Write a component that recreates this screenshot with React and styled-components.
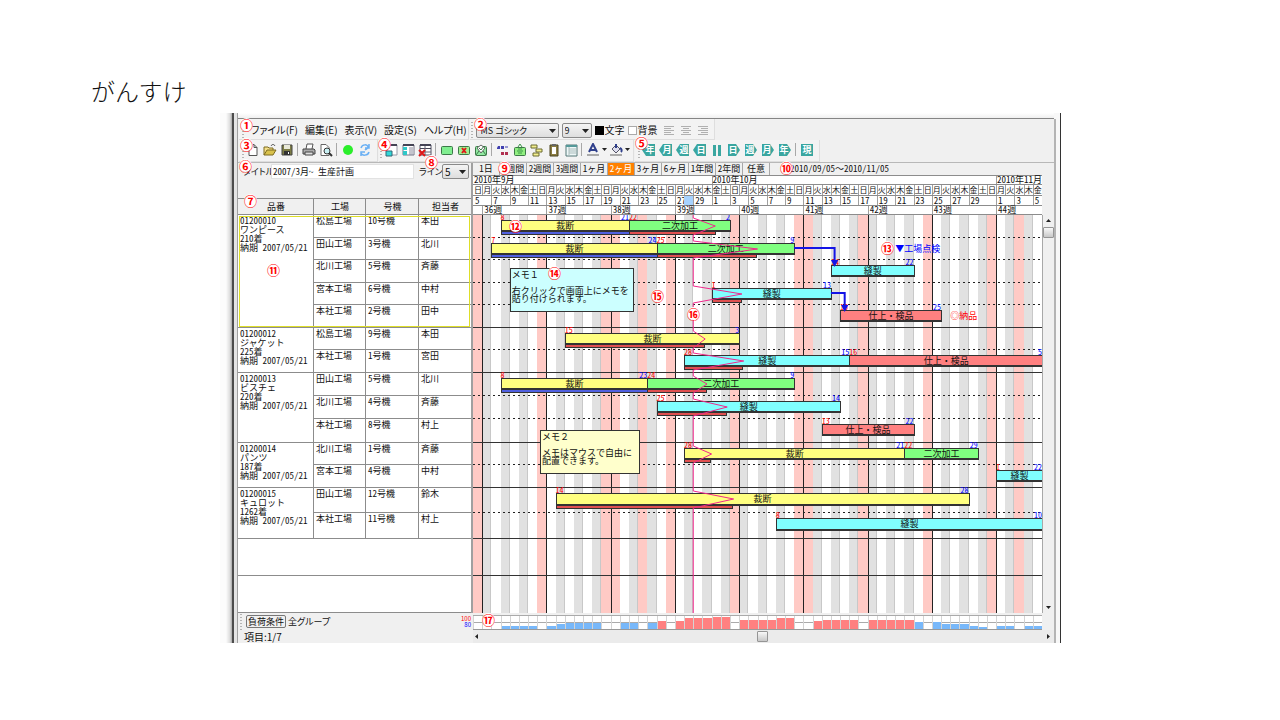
import { Fragment } from "react";
import styled, { createGlobalStyle, css } from "styled-components";

const GlobalStyle = createGlobalStyle`
  * {
    box-sizing: border-box;
  }

  body {
    margin: 0;
    background-color: #ffffff;
    color: #111111;
    font-family: "Noto Sans CJK JP", "Liberation Sans", sans-serif;
    font-size: 9px;
    line-height: 9px;
  }

  button,
  input,
  select {
    margin: 0;
    padding: 0;
    border: 0;
    background: none;
    color: inherit;
    font: inherit;
  }
`;

const DAYS = 62;
const TODAY = 24;
const FIRST_DAY = Date.UTC(2010, 8, 5);
const HOLIDAYS = ["9/20", "9/23", "10/11", "11/3"];
const WEEKDAYS = "日月火水木金土";

const days = Array.from({ length: DAYS }, (_, index) => {
  const date = new Date(FIRST_DAY + index * 86400000);
  const month = date.getUTCMonth() + 1;
  const day = date.getUTCDate();
  const weekday = date.getUTCDay();
  return {
    index,
    day,
    weekday,
    off: weekday === 0 || HOLIDAYS.includes(`${month}/${day}`),
  };
});

const MONTHS = [
  { label: "2010年9月", from: 0, to: 26 },
  { label: "2010年10月", from: 26, to: 57 },
  { label: "2010年11月", from: 57, to: 62 },
];

const COLORS = {
  cut: "#ffff80",
  second: "#80ff80",
  sew: "#80ffff",
  finish: "#ff8080",
};

const GROUPS = [
  {
    code: "01200010",
    name: "ワンピース",
    count: "210着",
    due: "納期 2007/05/21",
    selected: true,
    lanes: [
      {
        height: 23,
        row: ["松島工場", "10号機", "本田"],
        apex: 26.4,
        tasks: [
          { label: "裁断", kind: "cut", from: 3, to: 17, start: 8, end: 21, done: 17 },
          { label: "二次加工", kind: "second", from: 17, to: 28, start: 22, end: 2, late: 26.4 },
        ],
      },
      {
        height: 22,
        row: ["田山工場", "3号機", "北川"],
        apex: 31,
        tasks: [
          { label: "裁断", kind: "cut", from: 2, to: 20, start: 7, end: 24, done: 20 },
          { label: "二次加工", kind: "second", from: 20, to: 35, start: 25, end: 9, late: 30.9 },
        ],
      },
      {
        height: 23,
        row: ["北川工場", "5号機", "斉藤"],
        tasks: [{ label: "縫製", kind: "sew", from: 39, to: 48, start: 14, end: 22 }],
      },
      {
        height: 22,
        row: ["宮本工場", "6号機", "中村"],
        apex: 29.3,
        tasks: [{ label: "縫製", kind: "sew", from: 26, to: 39, start: 1, end: 13, late: 29.3 }],
      },
      {
        height: 23,
        row: ["本社工場", "2号機", "田中"],
        tasks: [{ label: "仕上・検品", kind: "finish", from: 40, to: 51, start: 15, end: 25 }],
      },
    ],
  },
  {
    code: "01200012",
    name: "ジャケット",
    count: "225着",
    due: "納期 2007/05/21",
    lanes: [
      {
        height: 22,
        row: ["松島工場", "9号機", "本田"],
        apex: 25.3,
        tasks: [{ label: "裁断", kind: "cut", from: 10, to: 29, start: 15, end: 3, late: 25.2 }],
      },
      {
        height: 23,
        row: ["本社工場", "1号機", "宮田"],
        apex: 29.5,
        tasks: [
          { label: "縫製", kind: "sew", from: 23, to: 41, start: 28, end: 15, late: 29.4 },
          { label: "仕上・検品", kind: "finish", from: 41, to: 62, start: 16, end: 5 },
        ],
      },
    ],
  },
  {
    code: "01200013",
    name: "ビスチェ",
    count: "220着",
    due: "納期 2007/05/21",
    lanes: [
      {
        height: 23,
        row: ["田山工場", "5号機", "北川"],
        apex: 25.5,
        tasks: [
          { label: "裁断", kind: "cut", from: 3, to: 19, start: 8, end: 23, done: 19 },
          { label: "二次加工", kind: "second", from: 19, to: 35, start: 24, end: 9, late: 25.5 },
        ],
      },
      {
        height: 23,
        row: ["北川工場", "4号機", "斉藤"],
        apex: 27.7,
        tasks: [{ label: "縫製", kind: "sew", from: 20, to: 40, start: 25, end: 14, late: 27.6 }],
      },
      {
        height: 24,
        row: ["本社工場", "8号機", "村上"],
        tasks: [{ label: "仕上・検品", kind: "finish", from: 38, to: 48, start: 13, end: 22 }],
      },
    ],
  },
  {
    code: "01200014",
    name: "パンツ",
    count: "187着",
    due: "納期 2007/05/21",
    lanes: [
      {
        height: 22,
        row: ["北川工場", "1号機", "斉藤"],
        apex: 26,
        tasks: [
          { label: "裁断", kind: "cut", from: 23, to: 47, start: 28, end: 21, late: 25.9 },
          { label: "二次加工", kind: "second", from: 47, to: 55, start: 22, end: 29 },
        ],
      },
      {
        height: 23,
        row: ["宮本工場", "4号機", "中村"],
        tasks: [{ label: "縫製", kind: "sew", from: 57, to: 62, start: 1, end: 22 }],
      },
    ],
  },
  {
    code: "01200015",
    name: "キュロット",
    count: "1262着",
    due: "納期 2007/05/21",
    lanes: [
      {
        height: 25,
        row: ["田山工場", "12号機", "鈴木"],
        apex: 28.4,
        tall: true,
        tasks: [{ label: "裁断", kind: "cut", from: 9, to: 54, start: 14, end: 28, late: 28.3 }],
      },
      {
        height: 26,
        row: ["本社工場", "11号機", "村上"],
        tall: true,
        tasks: [{ label: "縫製", kind: "sew", from: 33, to: 62, start: 8, end: 10 }],
      },
    ],
  },
];

const EMPTY_ROWS = [37, 37];

// load per day in pixels, 80% and above is drawn red
const LOAD = [
  0, 0, 0, 3, 3, 3, 3, 0, 3, 5, 6, 6, 6, 6, 0, 0, 6, 6, 0, 6, 8, 0, 8, 11, 11,
  11, 12, 12, 0, 9, 9, 9, 9, 11, 11, 0, 0, 8, 9, 9, 9, 9, 0, 9, 9, 9, 9, 9, 7,
  0, 7, 5, 5, 5, 3, 2, 0, 3, 3, 0, 3, 3,
];

const Page = styled.main`
  padding: 76px 219px 0 220px;
`;

const Title = styled.h1`
  margin: 0 0 7px -129px;
  color: #111111;
  font-size: 24px;
  font-weight: 300;
  line-height: 30px;
`;

const Window = styled.section`
  position: relative;
  display: grid;
  grid-template-columns: 18px minmax(0, 1fr) 7px;
`;

const LeftFrame = styled.div`
  background: linear-gradient(
    90deg,
    #fcfcfc 0 6px,
    #dcdcdc 10px,
    #a8a8a8 12px,
    #4c4c4c 12px 14px,
    #e4e4e4 14px 17px,
    #a0a0a0 17px
  );
`;

const RightFrame = styled.div`
  border-right: 1px solid #333333;
  background: linear-gradient(#b4b4b4, #b4b4b4) 0 6px / 2px 100% no-repeat #f8f8f8;
`;

const Client = styled.div`
  background-color: #f0f0f0;
`;

const CaptionEdge = styled.div`
  height: 6px;
  background: linear-gradient(#ffffff, #f0f0f0);
  border-bottom: 1px solid #858585;
`;

const ToolRow = styled.div`
  display: flex;
  height: ${({ $height }) => $height}px;
`;

const Toolbar = styled.div`
  display: flex;
  align-items: center;
  gap: ${({ $gap }) => $gap || 0}px;
  margin-left: 1px;
  padding: ${({ $top }) => $top || 0}px ${({ $end }) => $end || 4}px
    ${({ $bottom }) => $bottom || 0}px ${({ $start }) => $start || 3}px;
  border-right: 1px solid #dedede;
  border-bottom: 1px solid #dedede;
  background-color: #f3f3f3;
`;

const Grip = styled.span`
  width: 2px;
  height: 16px;
  background: repeating-linear-gradient(#b4b4b4 0 1px, transparent 1px 3px);
`;

const MenuButton = styled.button`
  font-size: 10px;
  line-height: 14px;
  white-space: nowrap;
  font-feature-settings: "palt";
`;

const SelectBox = styled.span`
  position: relative;
  display: block;
  width: ${({ $width }) => $width}px;
  height: 15px;

  select {
    display: block;
    width: 100%;
    height: 100%;
    padding-left: ${({ $indent }) => $indent || 2}px;
    appearance: none;
    border: 1px solid #8a8a8a;
    border-radius: 2px;
    background: linear-gradient(#f4f4f4, #dedede);
    font-size: ${({ $size }) => $size || 9}px;
    line-height: 13px;
    font-feature-settings: "palt";
  }

  svg {
    position: absolute;
    right: 3px;
    top: 6px;
    pointer-events: none;
  }
`;

const TextButton = styled.button`
  display: flex;
  align-items: center;
  gap: 1px;
  font-size: 10px;
  line-height: 14px;
`;

const Swatch = styled.span`
  width: 9px;
  height: 9px;
  border: 1px solid ${({ $color }) => ($color === "#ffffff" ? "#aaaaaa" : $color)};
  background-color: ${({ $color }) => $color};
`;

const AlignTools = styled.div`
  display: flex;
`;

const IconButton = styled.button`
  display: flex;
  align-items: center;
  justify-content: center;
  width: ${({ $width }) => $width || 17}px;
  height: 17px;
`;

const Separator = styled.span`
  width: 1px;
  height: 13px;
  margin: 0 2px;
  background-color: #a8a8a8;
`;

const Body = styled.div`
  display: grid;
  grid-template-columns: 235px minmax(0, 1fr) 12px;
  border-top: 1px solid #b8b8b8;
`;

const SidePane = styled.div`
  border-right: 2px solid #a0a0a0;
`;

const PlanForm = styled.form`
  display: flex;
  align-items: flex-start;
  height: 35px;
  padding: 1px 2px 0 5px;
`;

const FieldLabel = styled.label`
  width: ${({ $width }) => $width}px;
  font-size: 9px;
  line-height: 15px;
  white-space: nowrap;
  font-feature-settings: "palt";
`;

const PlanInput = styled.input`
  flex: 1;
  min-width: 0;
  height: 15px;
  margin-right: 5px;
  padding-left: 1px;
  border: 1px solid #e2e2e2;
  background-color: #ffffff;
  font-feature-settings: "hwid";
`;

const PlanTable = styled.table`
  width: 100%;
  table-layout: fixed;
  border-spacing: 0;
  background-color: #ffffff;
  font-feature-settings: "hwid";

  th,
  td {
    padding: 1px 1px 0 2px;
    border-right: 1px solid #8c8c8c;
    border-bottom: 1px solid #8c8c8c;
    vertical-align: top;
    text-align: left;
    font-weight: 400;
    line-height: 9px;
    white-space: nowrap;
  }

  th:last-child,
  td:last-child {
    border-right: 0;
  }

  thead th {
    border-top: 1px solid #8c8c8c;
    background-color: #f0f0f0;
    text-align: center;
    line-height: 13px;
  }
`;

const PlanRow = styled.tr`
  height: ${({ $height }) => $height}px;
`;

const PlanBody = styled.tbody`
  ${({ $selected }) =>
    $selected &&
    css`
      outline: 1px solid #dede28;
      outline-offset: -2px;
    `}
`;

const TimePane = styled.div`
  min-width: 0;
`;

const PeriodRow = styled.div`
  display: flex;
  height: 12px;
  white-space: nowrap;
  font-feature-settings: "hwid";
`;

const PeriodButton = styled.button`
  width: 27px;
  height: 12px;
  border-right: 1px solid #a8a8a8;
  background-color: ${({ $active }) => ($active ? "#ff8000" : "#f0f0f0")};
  color: ${({ $active }) => ($active ? "#ffffff" : "#111111")};
  line-height: 12px;
`;

const PeriodRange = styled.span`
  padding-left: 20px;
  line-height: 11px;
`;

const FullWidth = styled.span`
  font-feature-settings: normal;
`;

const dayGrid = css`
  display: grid;
  grid-template-columns: repeat(${DAYS}, minmax(0, 1fr));
`;

const ScaleRow = styled.div`
  ${dayGrid}
  height: ${({ $height }) => $height}px;
  border-top: 1px solid #8c8c8c;
  background-color: #ffffff;
  font-size: ${({ $size }) => $size || 9}px;
  font-feature-settings: "hwid";
`;

const ScaleCell = styled.span`
  grid-column: ${({ $from, $to }) => `${$from + 1} / ${$to + 1}`};
  padding-left: ${({ $inset }) => $inset || 0}px;
  border-left: 1px solid ${({ $from }) => ($from === 0 ? "transparent" : "#a0a0a0")};
  line-height: ${({ $line }) => $line}px;
  white-space: nowrap;
`;

const TodayCell = styled.span`
  grid-column: 24 / 25;
  grid-row: 1;
  background-color: #a6d2ff;
`;

const Canvas = styled.div`
  position: relative;
  overflow: hidden;
  border-top: 1px solid #8c8c8c;
  background-color: #ffffff;
`;

const Stripes = styled.div`
  ${dayGrid}
  position: absolute;
  inset: 0;
`;

const Stripe = styled.span`
  border-left: ${({ $monday }) => ($monday ? "1px solid #222222" : "0")};
  border-right: ${({ $even, $off }) => ($even && !$off ? "1px solid #c8c8c8" : "0")};
  background-color: ${({ $off, $even }) => ($off ? "#ffcac5" : $even ? "#e1e1e1" : "#ffffff")};
`;

const LINES = {
  solid: "linear-gradient(#333333, #333333)",
  dashed: "repeating-linear-gradient(90deg, #222222 0 2px, transparent 2px 5px)",
  none: "linear-gradient(transparent, transparent)",
};

const Lane = styled.div`
  ${dayGrid}
  position: relative;
  height: ${({ $height }) => $height}px;
  padding-top: 5px;
  background: ${({ $line }) => LINES[$line]} bottom / 100% 1px no-repeat;
`;

const Task = styled.div`
  position: relative;
  grid-column: ${({ $from, $to }) => `${$from + 1} / ${$to + 1}`};
  grid-row: 1;
  margin-right: -1px;
`;

const TaskFace = styled.div`
  height: ${({ $tall }) => ($tall ? 13 : 12)}px;
  border: 1px solid #333333;
  border-bottom-width: 2px;
  background-color: ${({ $kind }) => COLORS[$kind]};
  font-size: 9px;
  line-height: ${({ $tall }) => ($tall ? 10 : 9)}px;
  text-align: center;
  white-space: nowrap;
`;

const TaskProgress = styled.div`
  height: 4px;
  margin-top: -1px;
  border: 1px solid #333333;
  background-color: ${({ $late }) => ($late ? "#e05050" : "#5060e0")};
`;

const DayMark = styled.span`
  position: absolute;
  top: -7px;
  ${({ $end }) => ($end ? "right: 1px;" : "left: 0;")}
  color: ${({ $end }) => ($end ? "#0000ff" : "#ff0000")};
  font-size: 8px;
  line-height: 8px;
  font-feature-settings: "hwid";
`;

const Overlay = styled.svg`
  position: absolute;
  inset: 0;
  width: 100%;
  height: 100%;
  pointer-events: none;
`;

const Note = styled.span`
  position: absolute;
  left: ${({ $day }) => ($day / DAYS) * 100}%;
  top: ${({ $top }) => $top}px;
  color: ${({ $color }) => $color};
  white-space: nowrap;
`;

const Memo = styled.div`
  position: absolute;
  left: ${({ $day }) => ($day / DAYS) * 100}%;
  top: ${({ $top }) => $top}px;
  width: ${({ $width }) => $width}px;
  height: 44px;
  padding: 2px 1px;
  border: 1px solid #333333;
  background-color: ${({ $color }) => $color};
  line-height: 8px;
  white-space: pre;
`;

const VerticalScroll = styled.div`
  display: flex;
  flex-direction: column;
  align-items: center;
  justify-content: space-between;
  margin-top: 52px;
  padding: 4px 0;
  border-left: 1px solid #a8a8a8;
`;

const ScrollGroup = styled.div`
  display: flex;
  flex-direction: column;
  align-items: center;
  gap: 5px;
`;

const Thumb = styled.span`
  width: 11px;
  height: 11px;
  border: 1px solid #959595;
  border-radius: 1px;
  background: linear-gradient(#f8f8f8, #c8c8c8);
`;

const Footer = styled.footer`
  display: grid;
  grid-template-columns: 235px minmax(0, 1fr) 12px;
  grid-template-rows: 17px 13px;
`;

const LoadInfo = styled.div`
  display: flex;
  align-items: center;
  padding-left: 2px;
  font-feature-settings: "palt";
`;

const LoadButton = styled.button`
  height: 13px;
  margin: 0 2px 0 4px;
  padding: 0 1px;
  border: 1px solid #777777;
  border-radius: 2px;
  line-height: 11px;
`;

const LoadLevels = styled.span`
  display: flex;
  flex-direction: column;
  margin-left: auto;
  padding-right: 2px;
  color: #0000ff;
  font-size: 6px;
  line-height: 6px;
  text-align: right;

  b {
    color: #ff0000;
    font-weight: 400;
  }
`;

const LoadChart = styled.div`
  ${dayGrid}
  align-items: end;
  height: 15px;
  margin-top: 2px;
  border-top: 1px solid #aaaaaa;
  border-bottom: 1px solid #999999;
  background: linear-gradient(#aaaaaa, #aaaaaa) 0 6px / 100% 1px no-repeat #ffffff;
`;

const LoadDay = styled.span`
  display: flex;
  align-items: flex-end;
  height: 13px;
  border-left: 1px solid #d4d4d4;
`;

const LoadBar = styled.span`
  width: 100%;
  background-color: ${({ $over }) => ($over ? "#ff8080" : "#78b8fa")};
`;

const ItemCount = styled.div`
  padding-left: 6px;
  font-size: 10px;
  line-height: 13px;
  font-feature-settings: "palt";
`;

const HorizontalScroll = styled.div`
  display: flex;
  grid-column: 2 / 4;
  align-items: center;
  justify-content: space-between;
  padding: 0 4px 0 2px;
  background-color: #ebebeb;
`;

const Badge = styled.span`
  position: absolute;
  left: ${({ $x }) => $x - 6}px;
  top: ${({ $y }) => $y - 7}px;
  width: 13px;
  height: 13px;
  border-radius: 7px;
  background-color: #ffffff;
  color: #ff0000;
  font-size: 13px;
  font-weight: 700;
  line-height: 13px;
  text-align: center;
`;

const BADGES = [
  ["①", 26, 12],
  ["②", 260, 11],
  ["③", 26, 32],
  ["④", 164, 31],
  ["⑤", 421, 30],
  ["⑥", 25, 53],
  ["⑦", 30, 88],
  ["⑧", 211, 49],
  ["⑨", 284, 55],
  ["⑩", 566, 55],
  ["⑪", 53, 157],
  ["⑫", 295, 113],
  ["⑬", 667, 135],
  ["⑭", 334, 160],
  ["⑮", 437, 183],
  ["⑯", 473, 201],
  ["⑰", 268, 507],
];

function Triangle({ points = "0,0 7,0 3.5,4", width = 7, height = 4 }) {
  return (
    <svg width={width} height={height} aria-hidden="true">
      <polygon points={points} fill="#222" />
    </svg>
  );
}

const ICONS = {
  new: <path d="M3 1.5h5l3 3v8H3z M8 1.5v3h3" fill="#fff" stroke="#555" />,
  open: (
    <>
      <path d="M1 12V4h4l1 1h4v2" fill="#f5e08a" stroke="#7c6a20" />
      <path d="M1 12l3-5h9l-3 5z" fill="#d9c24c" stroke="#7c6a20" />
      <path d="M8 3c1-2 3-2 4 0" fill="none" stroke="#444" />
    </>
  ),
  save: (
    <>
      <path d="M2 2h10v10H2z" fill="#7c7c44" stroke="#444" />
      <path d="M4 2h6v4H4z" fill="#e8e8d8" />
      <path d="M4 8h6v4H4z" fill="#333" />
      <path d="M8 9h1v2H8z" fill="#fff" />
    </>
  ),
  print: (
    <>
      <path d="M4 6l1-5h6l-1 5" fill="#fff" stroke="#555" />
      <path d="M1 6h11l1 1v4H1z" fill="#aaa" stroke="#444" />
      <path d="M3 9h8v3H3z" fill="#ddd" stroke="#444" />
    </>
  ),
  preview: (
    <>
      <path d="M2 1.5h5l3 3v8H2z" fill="#fff" stroke="#666" />
      <circle cx="8" cy="8" r="3" fill="#c8f0f4" stroke="#333" />
      <path d="M10 10l3 3" stroke="#333" strokeWidth="2" />
    </>
  ),
  run: <circle cx="7" cy="7" r="5" fill="#2bee2b" />,
  refresh: (
    <path
      d="M3 5c1-4 7-4 7-1c0 2-2 2-3 3M11 1v4H7M11 9c-1 4-7 4-8 1M3 13V9h4"
      fill="none"
      stroke="#6ab0f4"
      strokeWidth="1.5"
    />
  ),
  panelBottom: (
    <>
      <path d="M3 2h10v10H3z" fill="#fff" stroke="#9a9aa8" />
      <path d="M3 1h10v2H3z" fill="#445" />
      <path d="M2 8h6v5H2z" fill="#30d8d8" stroke="#367" />
    </>
  ),
  panelLeft: (
    <>
      <path d="M2 2h11v10H2z" fill="#fff" stroke="#778" />
      <path d="M2 1h11v2H2z" fill="#445" />
      <path d="M2 4h4v3H2zM2 8h4v4H2z" fill="#30c8c8" />
      <path d="M8 5h4M8 7h4M8 9h4M8 11h4" stroke="#889" />
    </>
  ),
  panelDelete: (
    <>
      <path d="M2 2h11v10H2z" fill="#fff" stroke="#556" />
      <path d="M2 1h11v2H2zM2 5h11v1H2z" fill="#445" />
      <path d="M7 3v9M2 9h11" stroke="#667" />
      <path d="M1 7l6 6M7 7l-6 6" stroke="#e01818" strokeWidth="2" />
    </>
  ),
  bar: <rect x="1.5" y="3.5" width="11" height="8" rx="1" fill="#80ee90" stroke="#3c7848" />,
  barDelete: (
    <>
      <rect x="1.5" y="3.5" width="11" height="8" rx="1" fill="#a0ee90" stroke="#3c7848" />
      <path d="M5 5l4 5M9 5l-4 5" stroke="#e01818" strokeWidth="2" />
    </>
  ),
  barEdit: (
    <>
      <rect x="1.5" y="3.5" width="11" height="9" rx="1" fill="#90e8a0" stroke="#3c7848" />
      <path d="M3 5l4-3 4 3-4 5z" fill="#fff" stroke="#666" />
      <path d="M5 5l2 2 3-4" fill="none" stroke="#3c7848" />
      <path d="M2 12l3-4M12 12l-3-4" stroke="#3c7848" />
    </>
  ),
  marks: (
    <>
      <path d="M1 5l1-2h2v3H1zM5 3h3v3H5z" fill="#4040b0" />
      <path d="M5 9h3v3H5zM9 9h3v3H9z" fill="#b03050" />
      <path d="M9 4h3" stroke="#4040b0" />
    </>
  ),
  barUp: (
    <>
      <rect x="1.5" y="4.5" width="11" height="8" rx="1" fill="#90ee80" stroke="#3c7848" />
      <path d="M5 4l2-3 2 3M4 8h6M5 6h4M5 10h4" fill="none" stroke="#3c9848" />
    </>
  ),
  link: <path d="M1 2h6v3H1zM6 6h6v3H6zM3 10h6v3H3z" fill="#f4f090" stroke="#6b6b30" />,
  paste: (
    <>
      <path d="M3 2h8v11H3z" fill="#8a7c40" stroke="#4a4420" />
      <path d="M5 4h4v7H5z" fill="#fff" />
      <path d="M5 1h4v2H5z" fill="#666" />
    </>
  ),
  table: (
    <>
      <path d="M2 2h11v11H2z" fill="#eef8f8" stroke="#577" />
      <path d="M2 2h11v2H2z" fill="#599" />
      <path d="M5 4v9M5 6h8M5 8h8M5 10h8" stroke="#abb" />
    </>
  ),
  fontColor: (
    <>
      <path d="M3 9L7 1l4 8M4 7h6" fill="none" stroke="#30408c" strokeWidth="2" />
      <path d="M1 11h12v2H1z" fill="#aaa" />
    </>
  ),
  fill: (
    <>
      <path d="M3 6l4-4 4 4-4 4z" fill="#dde" stroke="#556" />
      <path d="M7 1v4M11 5c2 1 2 3 1 4" fill="none" stroke="#30408c" strokeWidth="2" />
      <path d="M1 11h12v2H1z" fill="#aaa" />
    </>
  ),
  pause: <path d="M3 2h3v11H3zM8 2h3v11H8z" fill="#3aa6a0" />,
  left: <path d="M2 3.5h10M2 5.5h7M2 7.5h10M2 9.5h7M2 11.5h10" stroke="#b0b0b0" />,
  center: <path d="M2 3.5h10M4 5.5h6M2 7.5h10M4 9.5h6M2 11.5h10" stroke="#b0b0b0" />,
  right: <path d="M2 3.5h10M5 5.5h7M2 7.5h10M5 9.5h7M2 11.5h10" stroke="#b0b0b0" />,
};

function Tool({ icon }) {
  return (
    <IconButton type="button" aria-label={icon}>
      <svg width="14" height="14" viewBox="0 0 14 14">
        {ICONS[icon]}
      </svg>
    </IconButton>
  );
}

const JUMP_SHAPES = {
  back: "0,7 4,1 13,1 13,13 4,13",
  next: "13,7 9,1 1,1 1,13 9,13",
  now: "1,1 13,1 13,13 1,13",
};

function JumpTool({ unit, direction }) {
  const x = { back: 8, next: 6, now: 7 }[direction];
  return (
    <IconButton type="button">
      <svg width="14" height="14" viewBox="0 0 14 14">
        <polygon points={JUMP_SHAPES[direction]} fill="#3aa6a0" />
        <text x={x} y="10" fontSize="9" fontWeight="700" textAnchor="middle" fill="#fff">
          {unit}
        </text>
      </svg>
    </IconButton>
  );
}

function Toolbars() {
  return (
    <>
      <ToolRow $height={21}>
        <Toolbar $gap={7} $start={3} $end={1} $top={2}>
          <Grip />
          <MenuButton type="button">ファイル(F)</MenuButton>
          <MenuButton type="button">編集(E)</MenuButton>
          <MenuButton type="button">表示(V)</MenuButton>
          <MenuButton type="button">設定(S)</MenuButton>
          <MenuButton type="button">ヘルプ(H)</MenuButton>
        </Toolbar>
        <Toolbar $gap={3} $start={1} $end={2} $top={2}>
          <Grip />
          <SelectBox $width={83} $indent={4}>
            <select aria-label="フォント">
              <option>MS ゴシック</option>
            </select>
            <Triangle />
          </SelectBox>
          <SelectBox $width={30}>
            <select aria-label="サイズ">
              <option>9</option>
            </select>
            <Triangle />
          </SelectBox>
          <TextButton type="button">
            <Swatch $color="#000000" />
            文字
          </TextButton>
          <TextButton type="button">
            <Swatch $color="#ffffff" />
            背景
          </TextButton>
          <AlignTools>
            <Tool icon="left" />
            <Tool icon="center" />
            <Tool icon="right" />
          </AlignTools>
        </Toolbar>
      </ToolRow>
      <ToolRow $height={22}>
        <Toolbar $bottom={2}>
          <Grip />
          <Tool icon="new" />
          <Tool icon="open" />
          <Tool icon="save" />
          <Separator />
          <Tool icon="print" />
          <Tool icon="preview" />
          <Separator />
          <Tool icon="run" />
          <Tool icon="refresh" />
        </Toolbar>
        <Toolbar $bottom={2} $start={1} $end={3}>
          <Grip />
          <Tool icon="panelBottom" />
          <Tool icon="panelLeft" />
          <Tool icon="panelDelete" />
          <Separator />
          <Tool icon="bar" />
          <Tool icon="barDelete" />
          <Tool icon="barEdit" />
          <Separator />
          <Tool icon="marks" />
          <Tool icon="barUp" />
          <Tool icon="link" />
          <Tool icon="paste" />
          <Tool icon="table" />
          <Separator />
          <Tool icon="fontColor" />
          <IconButton type="button" $width={6} aria-label="文字色">
            <Triangle points="0,0 5,0 2.5,3" width={5} height={3} />
          </IconButton>
          <Tool icon="fill" />
          <IconButton type="button" $width={6} aria-label="背景色">
            <Triangle points="0,0 5,0 2.5,3" width={5} height={3} />
          </IconButton>
        </Toolbar>
        <Toolbar $bottom={2}>
          <Grip />
          <JumpTool unit="年" direction="back" />
          <JumpTool unit="月" direction="back" />
          <JumpTool unit="週" direction="back" />
          <JumpTool unit="日" direction="back" />
          <Tool icon="pause" />
          <JumpTool unit="日" direction="next" />
          <JumpTool unit="週" direction="next" />
          <JumpTool unit="月" direction="next" />
          <JumpTool unit="年" direction="next" />
          <Separator />
          <JumpTool unit="現" direction="now" />
        </Toolbar>
      </ToolRow>
    </>
  );
}

function ProductTable() {
  return (
    <PlanTable>
      <colgroup>
        <col style={{ width: 76 }} />
        <col style={{ width: 52 }} />
        <col style={{ width: 53 }} />
        <col style={{ width: 52 }} />
      </colgroup>
      <thead>
        <PlanRow $height={17}>
          <th>品番</th>
          <th>工場</th>
          <th>号機</th>
          <th>担当者</th>
        </PlanRow>
      </thead>
      {GROUPS.map((group) => (
        <PlanBody key={group.code} $selected={group.selected}>
          {group.lanes.map((lane, index) => (
            <PlanRow key={lane.row[1]} $height={lane.height}>
              {index === 0 && (
                <td rowSpan={group.lanes.length}>
                  {group.code}
                  <br />
                  {group.name}
                  <br />
                  {group.count}
                  <br />
                  {group.due}
                </td>
              )}
              {lane.row.map((text) => (
                <td key={text}>{text}</td>
              ))}
            </PlanRow>
          ))}
        </PlanBody>
      ))}
      <tbody>
        {EMPTY_ROWS.map((height, index) => (
          <PlanRow key={index} $height={height}>
            <td colSpan={4} />
          </PlanRow>
        ))}
      </tbody>
    </PlanTable>
  );
}

function TimeScale() {
  const dayCells = days.filter(({ day }) => day % 2 === 1 && day !== 31);
  const weeks = Array.from({ length: 9 }, (_, index) => index * 7 + 1);

  return (
    <>
      <ScaleRow $height={9}>
        {MONTHS.map((month) => (
          <ScaleCell key={month.label} $from={month.from} $to={month.to} $line={8}>
            {month.label}
          </ScaleCell>
        ))}
      </ScaleRow>
      <ScaleRow $height={11} $size={8}>
        {days.map(({ index, weekday }) => (
          <ScaleCell key={index} $from={index} $to={index + 1} $line={10}>
            {WEEKDAYS[weekday]}
          </ScaleCell>
        ))}
      </ScaleRow>
      <ScaleRow $height={10}>
        {dayCells.map(({ index, day }, position) => (
          <ScaleCell
            key={index}
            $from={index}
            $to={position + 1 < dayCells.length ? dayCells[position + 1].index : DAYS}
            $inset={1}
            $line={9}
            style={{ gridRow: 1 }}
          >
            {day}
          </ScaleCell>
        ))}
        <TodayCell />
      </ScaleRow>
      <ScaleRow $height={9}>
        {weeks.map((from, index) => (
          <ScaleCell key={from} $from={from} $to={Math.min(from + 7, DAYS)} $inset={1} $line={8}>
            {36 + index}週
          </ScaleCell>
        ))}
      </ScaleRow>
    </>
  );
}

function Bar({ task, tall }) {
  const { label, kind, from, to, start, end, done, late } = task;
  const reached = done || late;
  return (
    <Task $from={from} $to={to}>
      <TaskFace $kind={kind} $tall={tall}>
        {label}
      </TaskFace>
      {reached && (
        <TaskProgress
          $late={Boolean(late)}
          style={{ width: `${((reached - from) / (to - from)) * 100}%` }}
        />
      )}
      <DayMark>{start}</DayMark>
      <DayMark $end>{end}</DayMark>
    </Task>
  );
}

function buildProgressPoints() {
  const points = [[TODAY, 0]];
  let top = 0;
  GROUPS.forEach((group) =>
    group.lanes.forEach((lane) => {
      if (lane.apex) {
        points.push([TODAY, top + 3], [lane.apex, top + 11], [TODAY, top + 20]);
      }
      top += lane.height;
    })
  );
  points.push([TODAY, 398]);
  return points.map(([day, y]) => `${day * 10},${y}`).join(" ");
}

function GanttCanvas() {
  return (
    <Canvas>
      <Stripes>
        {days.map(({ index, day, weekday, off }) => (
          <Stripe key={index} $off={off} $even={day % 2 === 0} $monday={weekday === 1} />
        ))}
      </Stripes>
      {GROUPS.map((group) => (
        <Fragment key={group.code}>
          {group.lanes.map((lane, index) => (
            <Lane
              key={lane.row[1]}
              $height={lane.height}
              $line={index === group.lanes.length - 1 ? "solid" : "dashed"}
            >
              {lane.tasks.map((task) => (
                <Bar key={task.from} task={task} tall={lane.tall} />
              ))}
            </Lane>
          ))}
        </Fragment>
      ))}
      {EMPTY_ROWS.map((height, index) => (
        <Lane key={index} $height={height} $line={index === 0 ? "solid" : "none"} />
      ))}
      <Overlay viewBox="0 0 620 398" preserveAspectRatio="none" aria-hidden="true">
        <polyline
          points={buildProgressPoints()}
          fill="none"
          stroke="#f0288c"
          vectorEffect="non-scaling-stroke"
        />
        <path
          d="M350 33H394V46M390 78H405V92"
          fill="none"
          stroke="#1414e6"
          strokeWidth="2"
          vectorEffect="non-scaling-stroke"
        />
        <path d="M390 45h8l-4 7zM401 90h8l-4 7z" fill="#1414e6" />
      </Overlay>
      <Note $day={46} $top={29} $color="#0000ff">
        ▼工場点検
      </Note>
      <Note $day={52} $top={96} $color="#ff0000">
        ◎納品
      </Note>
      <Memo $day={4} $top={53} $width={124} $color="#ccffff">
        {"メモ１\n\n右クリックで画面上にメモを\n貼り付けられます。"}
      </Memo>
      <Memo $day={7.3} $top={215} $width={100} $color="#ffffcc">
        {"メモ２\n\nメモはマウスで自由に\n配置できます。"}
      </Memo>
    </Canvas>
  );
}

const PERIODS = [
  "1日",
  "1週間",
  "2週間",
  "3週間",
  "1ヶ月",
  "2ヶ月",
  "3ヶ月",
  "6ヶ月",
  "1年間",
  "2年間",
  "任意",
];

function App() {
  return (
    <Page>
      <GlobalStyle />
      <Title>がんすけ</Title>
      <Window>
        <LeftFrame />
        <Client>
          <CaptionEdge />
          <Toolbars />
          <Body>
            <SidePane>
              <PlanForm>
                <FieldLabel htmlFor="title" $width={28}>
                  タイトル
                </FieldLabel>
                <PlanInput id="title" defaultValue="2007/3月〜 生産計画" />
                <FieldLabel htmlFor="lines" $width={23}>
                  ライン
                </FieldLabel>
                <SelectBox $width={27} $size={10}>
                  <select id="lines">
                    <option>5</option>
                  </select>
                  <Triangle />
                </SelectBox>
              </PlanForm>
              <ProductTable />
            </SidePane>
            <TimePane>
              <PeriodRow>
                {PERIODS.map((period) => (
                  <PeriodButton key={period} type="button" $active={period === "2ヶ月"}>
                    {period}
                  </PeriodButton>
                ))}
                <PeriodRange>
                  2010/09/05<FullWidth>〜</FullWidth>2010/11/05
                </PeriodRange>
              </PeriodRow>
              <TimeScale />
              <GanttCanvas />
            </TimePane>
            <VerticalScroll>
              <ScrollGroup>
                <Triangle points="0,3 5,3 2.5,0" width={5} height={3} />
                <Thumb />
              </ScrollGroup>
              <Triangle points="0,0 5,0 2.5,3" width={5} height={3} />
            </VerticalScroll>
          </Body>
          <Footer>
            <LoadInfo>
              <Grip />
              <LoadButton type="button">負荷条件</LoadButton>
              全グループ
              <LoadLevels>
                <b>100</b>
                80
              </LoadLevels>
            </LoadInfo>
            <LoadChart>
              {LOAD.map((load, index) => (
                <LoadDay key={index}>
                  <LoadBar $over={load > 7} style={{ height: load }} />
                </LoadDay>
              ))}
            </LoadChart>
            <span />
            <ItemCount>項目:1/7</ItemCount>
            <HorizontalScroll>
              <Triangle points="3,0 3,5 0,2.5" width={3} height={5} />
              <Thumb />
              <Triangle points="0,0 0,5 3,2.5" width={3} height={5} />
            </HorizontalScroll>
          </Footer>
        </Client>
        <RightFrame />
        {BADGES.map(([mark, x, y]) => (
          <Badge key={mark} $x={x} $y={y}>
            {mark}
          </Badge>
        ))}
      </Window>
    </Page>
  );
}

export default App;
